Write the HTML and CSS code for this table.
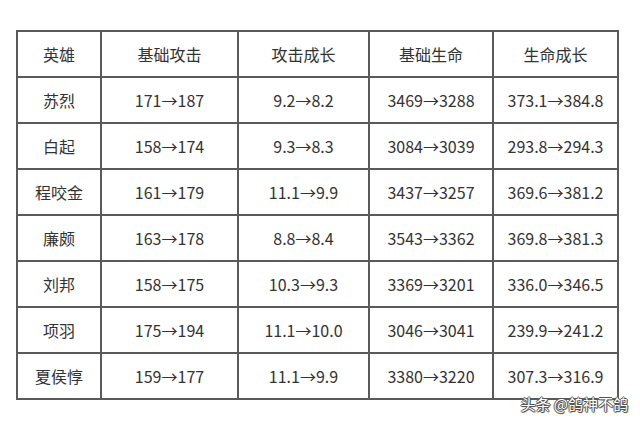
FILE: index.html
```html
<!DOCTYPE html>
<html lang="zh-CN">
<head>
<meta charset="utf-8">
<title>英雄属性对比</title>
<link rel="stylesheet" href="styles.css">
</head>
<body>
<div class="page">
  <div class="grid">
    <div class="cell">英雄</div><div class="cell">基础攻击</div><div class="cell">攻击成长</div><div class="cell">基础生命</div><div class="cell">生命成长</div>
    <div class="cell">苏烈</div><div class="cell">171→187</div><div class="cell">9.2→8.2</div><div class="cell">3469→3288</div><div class="cell">373.1→384.8</div>
    <div class="cell">白起</div><div class="cell">158→174</div><div class="cell">9.3→8.3</div><div class="cell">3084→3039</div><div class="cell">293.8→294.3</div>
    <div class="cell">程咬金</div><div class="cell">161→179</div><div class="cell">11.1→9.9</div><div class="cell">3437→3257</div><div class="cell">369.6→381.2</div>
    <div class="cell">廉颇</div><div class="cell">163→178</div><div class="cell">8.8→8.4</div><div class="cell">3543→3362</div><div class="cell">369.8→381.3</div>
    <div class="cell">刘邦</div><div class="cell">158→175</div><div class="cell">10.3→9.3</div><div class="cell">3369→3201</div><div class="cell">336.0→346.5</div>
    <div class="cell">项羽</div><div class="cell">175→194</div><div class="cell">11.1→10.0</div><div class="cell">3046→3041</div><div class="cell">239.9→241.2</div>
    <div class="cell">夏侯惇</div><div class="cell">159→177</div><div class="cell">11.1→9.9</div><div class="cell">3380→3220</div><div class="cell">307.3→316.9</div>
  </div>
  <div class="watermark">头条 @鸽神不鸽</div>
</div>
</body>
</html>
```
FILE: styles.css
```css
html, body {
  margin: 0;
  padding: 0;
  background: #fff;
}
.page {
  position: relative;
  width: 640px;
  height: 427px;
  padding: 30px 0 0 16px;
  box-sizing: border-box;
  font-family: "Noto Sans CJK SC", "Noto Sans", sans-serif;
  color: #333;
}
.grid {
  display: grid;
  width: max-content;
  grid-template-columns: 82px 135px 129px 122px 123px;
  grid-auto-rows: 44px;
  gap: 2px;
  padding: 2px;
  background: #5a5a5a;
}
.cell {
  background: #fff;
  display: flex;
  align-items: center;
  justify-content: center;
  font-size: 16px;
  white-space: nowrap;
}
.watermark {
  position: absolute;
  right: 12px;
  top: 393px;
  font-size: 15px;
  color: #fff;
  letter-spacing: 0;
  text-shadow: 1px 0 0 #555, -1px 0 0 #555, 0 1px 0 #555, 0 -1px 0 #555, 1px 1px 1px #555;
}
```
